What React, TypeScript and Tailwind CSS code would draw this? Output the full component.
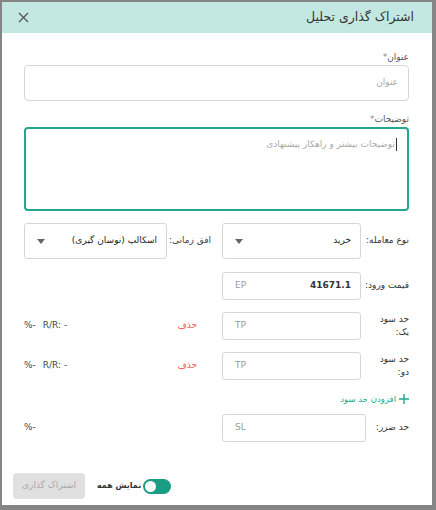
import React from 'react';

const font = { fontFamily: '"DejaVu Sans", "Noto Sans", sans-serif' };

const Caret = () => (
  <svg width="8" height="5" viewBox="0 0 8 5" className="shrink-0">
    <path d="M0 0h8L4 5z" fill="#666" />
  </svg>
);

const Select = ({ value, className }: { value: string; className: string }) => (
  <div className={`h-[36px] border border-[#d6d6d6] rounded-[3px] flex items-center justify-between pr-[9px] pl-[12px] text-[9px] text-[#222] whitespace-nowrap ${className}`}>
    <span>{value}</span>
    <Caret />
  </div>
);

const Field = ({ placeholder, value, className = 'w-[139px]' }: { placeholder: string; value?: string; className?: string }) => (
  <div className={`h-[28px] border border-[#d6d6d6] rounded-[3px] flex items-center justify-between pr-[9px] pl-[12px] text-[9px] shrink-0 ${className}`}>
    <span className="font-bold text-[#333]">{value ?? ''}</span>
    <span className="text-[#9a9a9a]">{placeholder}</span>
  </div>
);

const Stats = () => (
  <div className="flex-1 flex justify-start gap-[7px] text-[9px] text-[#444]" dir="ltr">
    <span>%-</span>
    <span>R/R: -</span>
  </div>
);

export default function App() {
  return (
    <div className="w-[436px] h-[510px] bg-[#858585] pt-[2px] pl-[2px] overflow-hidden" style={font}>
      <div dir="rtl" className="w-[430px] h-[503px] bg-white flex flex-col">
        {/* Header */}
        <div className="h-[31px] bg-[#c3e8e2] flex items-center justify-between pr-[18px] pl-[16px] shrink-0">
          <span className="text-[12.5px] text-[#333]">اشتراک گذاری تحلیل</span>
          <svg width="11" height="11" viewBox="0 0 11 11">
            <path d="M1 1l9 9M10 1l-9 9" stroke="#555" strokeWidth="1.3" />
          </svg>
        </div>

        <div className="flex flex-col pr-[23px] pl-[22px] pt-[17px]">
          <label className="text-[9px] text-[#555] leading-[14px]">عنوان<span className="text-[#888]">*</span></label>
          <div className="mt-[1px] h-[36px] border border-[#d6d6d6] rounded-[4px] flex items-center pr-[10px] text-[9px] text-[#aaa]">عنوان</div>

          <label className="mt-[11px] text-[9px] text-[#555] leading-[14px]">توضیحات<span className="text-[#888]">*</span></label>
          <div className="mt-[1px] h-[84px] border-2 border-[#22a88e] rounded-[4px] pr-[10px] pt-[9px] text-[9px] text-[#aaa] flex items-start">
            <span className="w-px h-[13px] bg-[#333] ml-[1px]" />
            <span>توضیحات بیشتر و راهکار پیشنهادی</span>
          </div>

          {/* Selects */}
          <div className="mt-[12px] flex items-center">
            <span className="w-[48px] text-[9px] text-[#333] whitespace-nowrap">نوع معامله:</span>
            <Select value="خرید" className="w-[139px]" />
            <span className="w-[55px] pr-[11px] text-[9px] text-[#444] whitespace-nowrap">افق زمانی:</span>
            <Select value="اسکالپ (نوسان گیری)" className="w-[143px]" />
          </div>

          {/* Entry */}
          <div className="mt-[13px] flex items-center">
            <span className="w-[48px] text-[9px] text-[#333] whitespace-nowrap">قیمت ورود:</span>
            <Field placeholder="EP" value="41671.1" />
          </div>

          {/* TP1 */}
          <div className="mt-[12px] flex items-center">
            <span className="w-[48px] text-[9px] text-[#333] leading-[13px]">حد سود<br />یک:</span>
            <Field placeholder="TP" />
            <span className="w-[55px] pr-[25px] text-[9px] text-[#f05a5a] whitespace-nowrap">حذف</span>
            <Stats />
          </div>

          {/* TP2 */}
          <div className="mt-[12px] flex items-center">
            <span className="w-[48px] text-[9px] text-[#333] leading-[13px]">حد سود<br />دو:</span>
            <Field placeholder="TP" />
            <span className="w-[55px] pr-[25px] text-[9px] text-[#f05a5a] whitespace-nowrap">حذف</span>
            <Stats />
          </div>

          <div className="mt-[13px] flex items-center gap-[3px] text-[8.5px] text-[#1fa88e]">
            <svg width="10" height="10" viewBox="0 0 10 10">
              <path d="M5 0v10M0 5h10" stroke="#1fa88e" strokeWidth="1.4" />
            </svg>
            <span>افزودن حد سود</span>
          </div>

          {/* SL */}
          <div className="mt-[8px] flex items-center">
            <span className="w-[43px] text-[9px] text-[#333] whitespace-nowrap">حد ضرر:</span>
            <Field placeholder="SL" className="w-[144px]" />
            <div className="flex-1 flex justify-start text-[9px] text-[#444]" dir="ltr">
              <span>%-</span>
            </div>
          </div>
        </div>

        {/* Footer */}
        <div className="mt-auto mb-[6px] flex items-center justify-end gap-[12px] pl-[11px]">
          <div className="flex items-center gap-[2px]">
            <div className="w-[28px] h-[15px] rounded-full bg-[#1a9d83] flex items-center justify-end px-[2px]">
              <span className="w-[11px] h-[11px] rounded-full bg-white" />
            </div>
            <span className="text-[8px] font-bold text-[#333]">نمایش همه</span>
          </div>
          <div className="w-[72px] h-[26px] rounded-[4px] bg-[#e0e0e0] flex items-center justify-center text-[9px] text-[#a8a8a8]">اشتراک گذاری</div>
        </div>
      </div>
    </div>
  );
}
